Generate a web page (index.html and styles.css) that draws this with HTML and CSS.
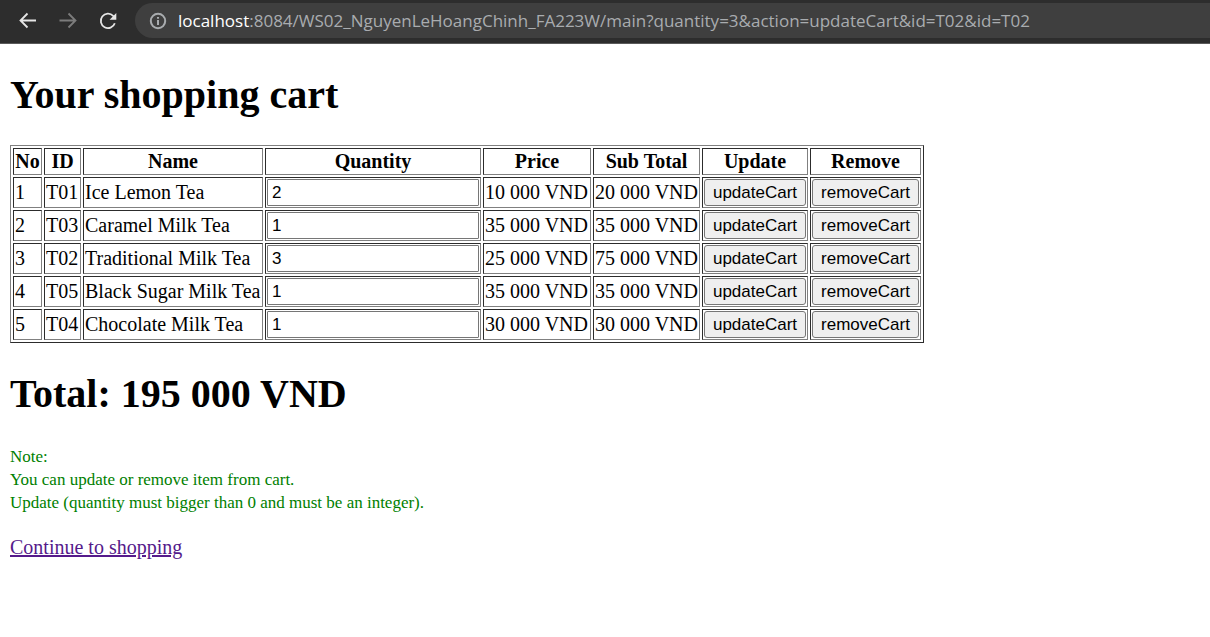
FILE: index.html
```
<!DOCTYPE html>
<html lang="en">
<head>
<meta charset="utf-8">
<meta name="viewport" content="width=device-width, initial-scale=1">
<title>Your shopping cart</title>
<link rel="stylesheet" href="styles.css">
</head>
<body>
<header class="toolbar">
  <nav class="nav-group">
    <button class="nav" type="button" aria-label="Back"><svg viewBox="0 0 20 20"><path d="M18 9.500H3M9.500 2.500l-7 7 7 7"/></svg></button>
    <button class="nav nav-off" type="button" aria-label="Forward" disabled><svg viewBox="0 0 20 20"><path d="M1.500 9.500H17M10.500 2.500l7 7-7 7"/></svg></button>
    <button class="nav" type="button" aria-label="Reload"><svg viewBox="0 0 20 20"><path d="M16.800 12.200A7.200 7.200 0 1 1 15.200 4.900L16.500 6.200"/><path class="solid" d="M18.300 2v6.700h-6.700z"/></svg></button>
  </nav>
  <div class="address">
    <svg class="info" viewBox="0 0 18 18"><circle cx="9" cy="9" r="7.200"/><path d="M9 8v5M9 5v1.800"/></svg>
    <span class="url"><span class="host">localhost</span>:8084/WS02_NguyenLeHoangChinh_FA223W/main?quantity=3&amp;action=updateCart&amp;id=T02&amp;id=T02</span>
  </div>
</header>
<main class="page">
  <h1 class="title">Your shopping cart</h1>
  <table class="cart">
    <colgroup><col class="c-no"><col class="c-id"><col class="c-name"><col class="c-qty"><col class="c-price"><col class="c-sub"><col class="c-update"><col class="c-remove"></colgroup>
    <thead>
      <tr><th>No</th><th>ID</th><th>Name</th><th>Quantity</th><th>Price</th><th>Sub Total</th><th>Update</th><th>Remove</th></tr>
    </thead>
    <tbody>
      <tr><td>1</td><td>T01</td><td>Ice Lemon Tea</td><td><input class="qty" type="text" aria-label="Quantity of Ice Lemon Tea" value="2"></td><td>10 000 VND</td><td>20 000 VND</td><td><button class="action" type="button">updateCart</button></td><td><button class="action" type="button">removeCart</button></td></tr>
      <tr><td>2</td><td>T03</td><td>Caramel Milk Tea</td><td><input class="qty" type="text" aria-label="Quantity of Caramel Milk Tea" value="1"></td><td>35 000 VND</td><td>35 000 VND</td><td><button class="action" type="button">updateCart</button></td><td><button class="action" type="button">removeCart</button></td></tr>
      <tr><td>3</td><td>T02</td><td>Traditional Milk Tea</td><td><input class="qty" type="text" aria-label="Quantity of Traditional Milk Tea" value="3"></td><td>25 000 VND</td><td>75 000 VND</td><td><button class="action" type="button">updateCart</button></td><td><button class="action" type="button">removeCart</button></td></tr>
      <tr><td>4</td><td>T05</td><td>Black Sugar Milk Tea</td><td><input class="qty" type="text" aria-label="Quantity of Black Sugar Milk Tea" value="1"></td><td>35 000 VND</td><td>35 000 VND</td><td><button class="action" type="button">updateCart</button></td><td><button class="action" type="button">removeCart</button></td></tr>
      <tr><td>5</td><td>T04</td><td>Chocolate Milk Tea</td><td><input class="qty" type="text" aria-label="Quantity of Chocolate Milk Tea" value="1"></td><td>30 000 VND</td><td>30 000 VND</td><td><button class="action" type="button">updateCart</button></td><td><button class="action" type="button">removeCart</button></td></tr>
    </tbody>
  </table>
  <h1 class="title">Total: 195 000 VND</h1>
  <p class="note">Note:<br>You can update or remove item from cart.<br>Update (quantity must bigger than 0 and must be an integer).</p>
  <a class="continue" href="#shop">Continue to shopping</a>
</main>
</body>
</html>
```
FILE: styles.css
```
body {
  margin: 0;
  background: #fff;
  color: #000;
  font: 20px/23px "Liberation Serif", "Times New Roman", serif;
}

/* Browser toolbar */
.toolbar {
  display: flex;
  align-items: center;
  gap: 17px;
  padding: 3px 0 5px 18px;
  background: #2d2d2d;
  border-bottom: 1px solid #5a5a5a;
}
.nav-group {
  flex: none;
  display: flex;
  gap: 20px;
}
.nav {
  display: flex;
  padding: 0;
  border: 0;
  background: none;
  color: #e6e6e6;
}
.nav-off { color: #7c7c7c; }
.nav svg {
  width: 20px;
  height: 20px;
  fill: none;
  stroke: currentColor;
  stroke-width: 1.8;
}
.nav .solid {
  fill: currentColor;
  stroke: none;
}
.address {
  flex: 1;
  min-width: 0;
  display: flex;
  align-items: center;
  gap: 11px;
  height: 35px;
  padding-left: 14px;
  border-radius: 18px 0 0 18px;
  background: #3f3f3f;
}
.info {
  flex: none;
  width: 18px;
  height: 18px;
  fill: none;
  stroke: #a9acaf;
  stroke-width: 2;
}
.url {
  overflow: hidden;
  white-space: nowrap;
  color: #a9acaf;
  font: 17px/24px "Open Sans", "Noto Sans", sans-serif;
}
.host { color: #fff; }

/* Cart */
.page { padding: 0 10px 10px; }
.title {
  margin: 28px 0;
  font-size: 40px;
  line-height: 45px;
}
.cart {
  table-layout: fixed;
  width: 914px;
  border: 1px outset #808080;
  border-collapse: separate;
  border-spacing: 2px;
  white-space: nowrap;
}
.cart th,
.cart td {
  padding: 1px;
  border: 1px inset #808080;
}
.c-no { width: 29px; }
.c-id { width: 37px; }
.c-name { width: 180px; }
.c-qty { width: 216px; }
.c-price { width: 108px; }
.c-sub { width: 107px; }
.c-update { width: 106px; }
.c-remove { width: 111px; }
.qty,
.action {
  display: block;
  box-sizing: border-box;
  width: 100%;
  height: 27px;
  border: 1px solid #767676;
  color: #000;
  font: 17px/21px "Liberation Sans", Arial, sans-serif;
}
.qty {
  padding: 1px 4px;
  border-radius: 1px;
  background: #fff;
}
.action {
  padding: 1px 6px;
  border-radius: 3px;
  background: #efefef;
}
.note {
  margin: 29px 0 22px;
  color: #008000;
  font-size: 17px;
}
.continue { color: #551a8b; }
```
